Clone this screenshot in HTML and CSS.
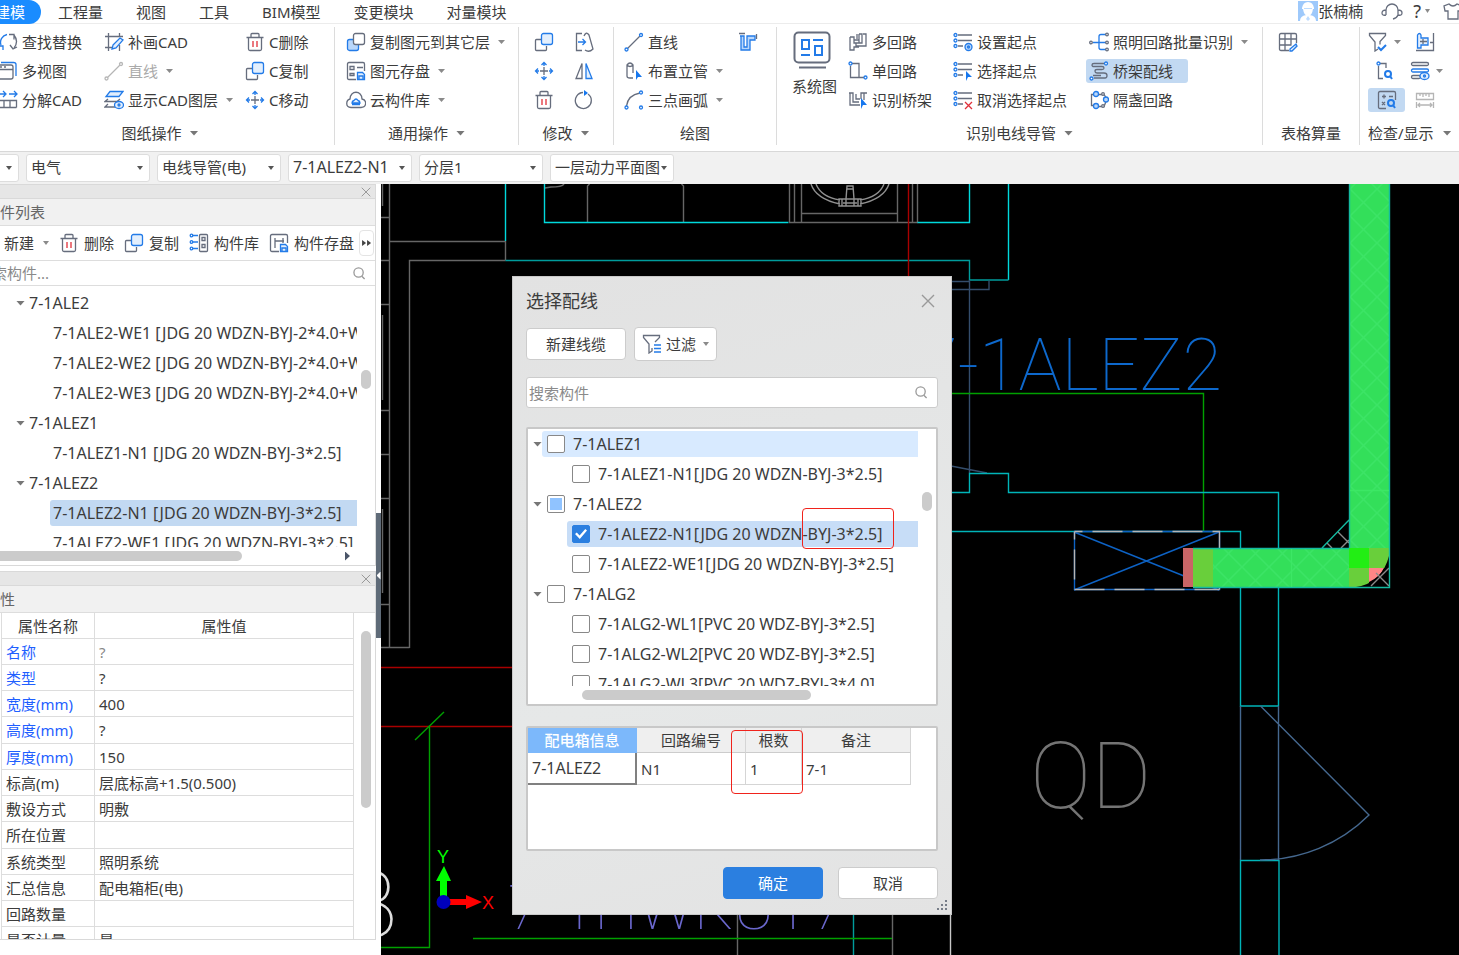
FILE: index.html
```html
<!DOCTYPE html>
<html lang="zh-CN">
<head>
<meta charset="utf-8">
<title>选择配线</title>
<link rel="stylesheet" href="styles.css">
</head>
<body>
<svg class="sprite" aria-hidden="true">
  <symbol id="find" viewBox="0 0 20 20"><path class="b" d="M9 2.500A8 8 0 0 0 3 13M0 14h5v4" /><path class="d" d="M11 2.500h5v5M16 3c4 5 3 9 0 13M12 13l3 4 4-2" /></symbol>
  <symbol id="views" viewBox="0 0 20 20"><path class="b" d="M3 1.500h12.500q2.500 0 2.500 2V15"/><rect class="d w" x="0" y="4" width="15" height="14" rx="2"/><path class="d" d="M0 8.500h15M2 6h2M6 6h2"/></symbol>
  <symbol id="split" viewBox="0 0 20 20"><path class="b" d="M0 4h7M5 1L8 4 5 7M11 4h8M16 1l3 3-3 3"/><path class="d" d="M0 10.500h18.500v7M0 17.500h18.500M6 10.500v7M12 10.500v7"/></symbol>
  <symbol id="sketch" viewBox="0 0 20 20"><path class="d" d="M4.500 1v18M1 4.500h18M1 15.500h7M15.500 1v4M15.500 13v6"/><path class="b f" d="M9 13l7-7 3 2-7 8-4 1z"/></symbol>
  <symbol id="line" viewBox="0 0 20 20"><path class="d" d="M3.500 16.500L16 4"/><circle class="b w" cx="2.500" cy="17.500" r="1.500"/><circle class="b w" cx="17" cy="3" r="1.500"/></symbol>
  <symbol id="layers" viewBox="0 0 20 20"><path class="b f" d="M6 1.500h13l-4 5H2z"/><path class="d" d="M4 9l-3 2.500h12l3-2.500M4 14l-3 3h10"/><ellipse class="b f" cx="15" cy="15" rx="4.500" ry="3.500"/><circle class="b" cx="15" cy="15" r="1"/></symbol>
  <symbol id="trash" viewBox="0 0 20 20"><path class="d" d="M1.500 5.500h17M6 5V2.500q0-1 1-1h6q1 0 1 1V5M3.500 6v11q0 1.500 1.500 1.500h10q1.500 0 1.500-1.500V6"/><path class="r" d="M8 9v6M12 9v6"/></symbol>
  <symbol id="copy" viewBox="0 0 20 20"><path class="d" d="M7 7.500H2.500q-1 0-1 1v9q0 1 1 1h9q1 0 1-1V14"/><rect class="b f" x="7.500" y="1.500" width="11" height="11" rx="2"/></symbol>
  <symbol id="copy2" viewBox="0 0 20 20"><rect class="b f2" x="1.500" y="7.500" width="11" height="11" rx="2"/><rect class="d w" x="7.500" y="1.500" width="11" height="11" rx="2"/></symbol>
  <symbol id="move" viewBox="0 0 20 20"><path class="d" d="M10 6v8M6 10h8"/><path class="b" d="M10 5V1.500M7.500 4L10 1.500 12.500 4M10 15v3.500M7.500 16l2.500 2.500 2.500-2.500M5 10H1.500M4 7.500L1.500 10 4 12.500M15 10h3.500M16 7.500l2.500 2.500-2.500 2.500"/></symbol>
  <symbol id="save" viewBox="0 0 20 20"><path class="d" d="M10 18.500H3q-1.500 0-1.500-1.500V3Q1.500 1.500 3 1.500h14q1.500 0 1.500 1.500v7M4 5.500h4v3H4zM11 6.500h6M4 12.500h4v2H4z"/><path class="b f" d="M11.500 11.500h5l2 2v5h-7zM13 18v-3h4v3"/></symbol>
  <symbol id="cloud" viewBox="0 0 20 20"><path class="d" d="M5 17.500C-1 17 0 10 4 9 4 0 16 0 16 9c5 1 5 8-1 8.500z"/><path class="b f" d="M6 13q0-2 2-2.500 2-3 4 0 2 .500 2 2.500zM6 14.500h8"/></symbol>
  <symbol id="stretch" viewBox="0 0 20 20"><path class="d" d="M8 1.500H2.500v17H8M10 4q2-5 5-1l4 14q-4 4-8 1"/><path class="b" d="M4 10h7M8.500 7l3 3-3 3"/></symbol>
  <symbol id="mirror" viewBox="0 0 20 20"><path class="d" d="M8 2.500v15H2z"/><path class="b f" d="M12 2.500v15h6z"/></symbol>
  <symbol id="rotate" viewBox="0 0 20 20"><path class="d" d="M9 2.500A8 8 0 1 0 14 4"/><path class="bf" d="M10 0l4 3-4 3z"/></symbol>
  <symbol id="riser" viewBox="0 0 20 20"><path class="d" d="M9 17H6q-3 0-3-2V4q3-4 6 0v8M3 4q3 3 6 0"/><path class="bf" d="M12 9l6 7h-4l-2 3z"/></symbol>
  <symbol id="arc" viewBox="0 0 20 20"><path class="d" d="M2.500 16Q4 5 16 3"/><circle class="b w" cx="2.500" cy="17.500" r="1.500"/><circle class="b w" cx="17" cy="2.500" r="1.500"/><circle class="b w" cx="17" cy="17.500" r="1.500"/></symbol>
  <symbol id="elbow" viewBox="0 0 20 20"><path class="b f2" d="M2 4h4v11h3V4h8v4h-5v10H3V4z"/><path class="d" d="M1 1.500h6M18.500 2v5"/></symbol>
  <symbol id="system" viewBox="0 0 40 40"><rect class="d k2" x="2.500" y="2.500" width="35" height="30" rx="4"/><path class="d k2" d="M7 37.500h27"/><path class="b k2" d="M10 10h7v9h-7zM23 16h7v9h-7zM21 10h10M9 25h9"/></symbol>
  <symbol id="multi" viewBox="0 0 20 20"><path class="d" d="M2 5h4v6h5V2M2 5v13h4v-3h5M9 2v5M6 8h5M11 2h3v9H8v3h10V2h-3"/></symbol>
  <symbol id="single" viewBox="0 0 20 20"><path class="d" d="M2.500 5v11.500H11V2.500H4M11 16.500h5"/><circle class="b w" cx="2.500" cy="2.500" r="1.500"/><circle class="b w" cx="17.500" cy="16.500" r="1.500"/></symbol>
  <symbol id="tray" viewBox="0 0 20 20"><path class="d" d="M1 3h4v9h6M2 3v12h10M8 4v5h4M13 9V3h6M16 3v7"/><path class="bf" d="M13 8l6 7h-4l-2 4z"/></symbol>
  <symbol id="nodes" viewBox="0 0 20 20"><path class="d" d="M5 3h14M5 8.500h14M5 14h5"/><circle class="b w" cx="2.500" cy="3" r="1.500"/><circle class="b w" cx="2.500" cy="8.500" r="1.500"/><circle class="b w" cx="2.500" cy="14" r="1.500"/></symbol>
  <symbol id="set" viewBox="0 0 20 20"><use href="#nodes"/><circle class="b f2" cx="15.500" cy="15" r="3.500"/><circle class="b" cx="15.500" cy="15" r="1"/></symbol>
  <symbol id="pick" viewBox="0 0 20 20"><use href="#nodes"/><path class="bf" d="M13 10l6 6h-4l-2 4z"/></symbol>
  <symbol id="unpick" viewBox="0 0 20 20"><use href="#nodes"/><path class="r" d="M12 12l7 7M19 12l-7 7"/></symbol>
  <symbol id="batch" viewBox="0 0 20 20"><path class="b" d="M4 10.500h6M17 2.500h-5q-2 0-2 2v11q0 2 2 2h5M10 10.500h7"/><circle class="d w" cx="2" cy="10.500" r="1.300"/><circle class="d w" cx="18" cy="2.500" r="1.300"/><circle class="d w" cx="18" cy="10.500" r="1.300"/><circle class="d w" cx="18" cy="17.500" r="1.300"/></symbol>
  <symbol id="wire" viewBox="0 0 20 20"><path class="d" d="M15 2.500H5q-2 0-2 1.500t2 1.500h8q2 0 2 1.500t-2 1.500H8q-2 0-2 1.700t2 1.800h7q3 0 3 2.500t-2 2.500H5M4 14.500h8"/><circle class="b w" cx="17" cy="2.500" r="1.500"/><circle class="b w" cx="2.500" cy="17.500" r="1.500"/></symbol>
  <symbol id="gang" viewBox="0 0 20 20"><path class="d" d="M4 4.500H2.500v11H6M8 16.500h7l2-5M8 4.500h7l2 3"/><circle class="b f2" cx="7" cy="4" r="2.500"/><circle class="b f2" cx="17" cy="9.500" r="2.500"/><circle class="b f2" cx="7" cy="16" r="2.500"/><circle class="d w" cx="14" cy="4" r="1.300"/><circle class="d w" cx="14" cy="16" r="1.300"/></symbol>
  <symbol id="grid" viewBox="0 0 20 20"><path class="d" d="M11 18.500H3q-1.500 0-1.500-1.500V3Q1.500 1.500 3 1.500h14q1.500 0 1.500 1.500v8M1.500 7h17M1.500 13h12M7 1.500v17M13 1.500v11"/><path class="b f" d="M12 17l6-5 1 2-5 5h-2z"/></symbol>
  <symbol id="funnelok" viewBox="0 0 20 20"><path class="d" d="M10 17l-3 2v-9L1.500 3.500v-2h16v2L12 9.500v3"/><path class="b k2" d="M10 15l3 3 5-5"/></symbol>
  <symbol id="pipe" viewBox="0 0 20 20"><path class="d" d="M18.500 1v17.500H1M18 10.500h-3"/><path class="b f" d="M2.500 3q2-3 3.500 0v3h7v7H6v3H2.500z"/><path class="d" d="M5 9.500h7M8 7v5"/></symbol>
  <symbol id="inspect" viewBox="0 0 20 20"><path class="d" d="M4.500 5v12.500H9M6 2.500h6V7"/><circle class="b w" cx="4.500" cy="2.500" r="1.500"/><circle class="b k2" cx="14" cy="13" r="3"/><path class="b k2" d="M16 15l2 3"/></symbol>
  <symbol id="showhide" viewBox="0 0 20 20"><rect class="d" x="1.500" y="1.500" width="17" height="3" rx="1.500"/><rect class="b" x="1.500" y="8" width="17" height="3" rx="1.500"/><rect class="d" x="1.500" y="14.500" width="9" height="3" rx="1.500"/><ellipse class="b f" cx="14.500" cy="15" rx="4.500" ry="3.500"/><circle class="b" cx="14.500" cy="15" r="1"/></symbol>
  <symbol id="check" viewBox="0 0 20 20"><path class="d" d="M9 18.500H3q-1.500 0-1.500-1.500V3Q1.500 1.500 3 1.500h14q1.500 0 1.500 1.500v7M5 6.500h4M7 4.500v4M12 6.500h4M5 12l3 3M8 12l-3 3"/><circle class="b k2" cx="14" cy="13" r="3"/><path class="b k2" d="M16 15l2 3"/></symbol>
  <symbol id="ruler" viewBox="0 0 20 20"><path class="d" d="M1.500 3.500h17v6h-17zM5 4v2M8 4v3M11 4v2M14 4v3M1.500 12v6M18.500 12v6M3 15h14M5 13l-2 2 2 2M15 13l2 2-2 2"/></symbol>
  <symbol id="headset" viewBox="0 0 22 20"><path class="d" d="M5 14V9a6 6 0 0 1 12 0v5M5 9q-4 0-4 3t4 2M17 9q4 0 4 3t-4 2q-1 3-5 4"/></symbol>
  <symbol id="shirt" viewBox="0 0 22 20"><path class="d" d="M7 3q4 4 8 0l5 2-1 5h-3v8H6v-8H3L2 5z"/></symbol>
  <symbol id="avatar" viewBox="0 0 20 20"><path fill="#9ec9fb" d="M0 0h20v20H0z"/><path fill="#fff" d="M4 7q1-6 6-6t6 6v1h-1q-1 7-5 7T5 8H4zM2 20q0-5 6-6h4q6 1 6 6z"/><path fill="#bddcff" d="M6 7h8v1H6zM10 15l2 3-2 2-2-2z"/></symbol>
  <symbol id="search" viewBox="0 0 14 14"><circle class="g" cx="6" cy="6" r="5"/><path class="g" d="M9.500 10l3 3"/></symbol>
  <symbol id="funnel" viewBox="0 0 20 20"><path class="d" d="M10 14v3l-3 2v-9L1.500 3.500v-2h16v2L13 8"/><path class="b" d="M12 11h7M12 14.500h7M12 18h7"/></symbol>
  <symbol id="library" viewBox="0 0 20 20"><path class="b" d="M4 2.500h5M4 9h5M4 15.500h5"/><circle class="b w" cx="2.500" cy="2.500" r="1.300"/><circle class="b w" cx="2.500" cy="9" r="1.300"/><circle class="b w" cx="2.500" cy="15.500" r="1.300"/><rect class="d" x="10.500" y="1.500" width="8" height="17" rx="1"/><path class="d" d="M13 4.500h3v3h-3zM13 11.500h3v3h-3z"/></symbol>
  <symbol id="store" viewBox="0 0 20 20"><path class="d" d="M10 18.500H3q-1.500 0-1.500-1.500V3Q1.500 1.500 3 1.500h14q1.500 0 1.500 1.500v7M6 5v10M6 8h9M14 5v5"/><path class="b f" d="M11.500 11.500h5l2 2v5h-7zM13 18v-3h4v3"/></symbol>
  <symbol id="close" viewBox="0 0 14 14"><path class="g" d="M1 1l12 12M13 1L1 13"/></symbol>
</svg>

<div class="app">
  <header class="tabbar">
    <nav class="tabs">
      <button class="tab active">建模</button><button class="tab">工程量</button><button class="tab">视图</button><button class="tab">工具</button><button class="tab">BIM模型</button><button class="tab">变更模块</button><button class="tab">对量模块</button>
    </nav>
    <div class="account">
      <svg class="ic"><use href="#avatar"/></svg><span class="user">张楠楠</span>
      <button class="plain" aria-label="客服"><svg class="ic wide"><use href="#headset"/></svg></button>
      <button class="plain help">?<i class="caret"></i></button>
      <button class="plain" aria-label="皮肤"><svg class="ic wide"><use href="#shirt"/></svg></button>
    </div>
  </header>

  <section class="ribbon">
    <div class="group drawing">
      <div class="tools">
        <button class="tool"><svg class="ic"><use href="#find"/></svg>查找替换</button>
        <button class="tool"><svg class="ic"><use href="#views"/></svg>多视图</button>
        <button class="tool"><svg class="ic"><use href="#split"/></svg>分解CAD</button>
        <button class="tool"><svg class="ic"><use href="#sketch"/></svg>补画CAD</button>
        <button class="tool off" disabled><svg class="ic"><use href="#line"/></svg>直线<i class="caret"></i></button>
        <button class="tool"><svg class="ic"><use href="#layers"/></svg>显示CAD图层<i class="caret"></i></button>
        <button class="tool"><svg class="ic"><use href="#trash"/></svg>C删除</button>
        <button class="tool"><svg class="ic"><use href="#copy"/></svg>C复制</button>
        <button class="tool"><svg class="ic"><use href="#move"/></svg>C移动</button>
      </div>
      <div class="caption">图纸操作<i class="caret big"></i></div>
    </div>
    <div class="group common">
      <div class="tools">
        <button class="tool"><svg class="ic"><use href="#copy2"/></svg>复制图元到其它层<i class="caret"></i></button>
        <button class="tool"><svg class="ic"><use href="#save"/></svg>图元存盘<i class="caret"></i></button>
        <button class="tool"><svg class="ic"><use href="#cloud"/></svg>云构件库<i class="caret"></i></button>
      </div>
      <div class="caption">通用操作<i class="caret big"></i></div>
    </div>
    <div class="group modify">
      <div class="tools">
        <button class="tool" aria-label="复制"><svg class="ic"><use href="#copy"/></svg></button>
        <button class="tool" aria-label="移动"><svg class="ic"><use href="#move"/></svg></button>
        <button class="tool" aria-label="删除"><svg class="ic"><use href="#trash"/></svg></button>
        <button class="tool" aria-label="拉伸"><svg class="ic"><use href="#stretch"/></svg></button>
        <button class="tool" aria-label="镜像"><svg class="ic"><use href="#mirror"/></svg></button>
        <button class="tool" aria-label="旋转"><svg class="ic"><use href="#rotate"/></svg></button>
      </div>
      <div class="caption">修改<i class="caret big"></i></div>
    </div>
    <div class="group draw">
      <div class="tools">
        <button class="tool"><svg class="ic"><use href="#line"/></svg>直线</button>
        <button class="tool"><svg class="ic"><use href="#riser"/></svg>布置立管<i class="caret"></i></button>
        <button class="tool"><svg class="ic"><use href="#arc"/></svg>三点画弧<i class="caret"></i></button>
        <button class="tool" aria-label="弯头"><svg class="ic"><use href="#elbow"/></svg></button>
      </div>
      <div class="caption">绘图</div>
    </div>
    <div class="group recognize">
      <div class="tools">
        <button class="tool tall"><svg class="ic large"><use href="#system"/></svg>系统图</button>
        <button class="tool"><svg class="ic"><use href="#multi"/></svg>多回路</button>
        <button class="tool"><svg class="ic"><use href="#single"/></svg>单回路</button>
        <button class="tool"><svg class="ic"><use href="#tray"/></svg>识别桥架</button>
        <button class="tool"><svg class="ic"><use href="#set"/></svg>设置起点</button>
        <button class="tool"><svg class="ic"><use href="#pick"/></svg>选择起点</button>
        <button class="tool"><svg class="ic"><use href="#unpick"/></svg>取消选择起点</button>
        <button class="tool"><svg class="ic"><use href="#batch"/></svg>照明回路批量识别<i class="caret"></i></button>
        <button class="tool on"><svg class="ic"><use href="#wire"/></svg>桥架配线</button>
        <button class="tool"><svg class="ic"><use href="#gang"/></svg>隔盏回路</button>
      </div>
      <div class="caption">识别电线导管<i class="caret big"></i></div>
    </div>
    <div class="group calc">
      <div class="tools">
        <button class="tool" aria-label="表格"><svg class="ic"><use href="#grid"/></svg></button>
      </div>
      <div class="caption">表格算量</div>
    </div>
    <div class="group review">
      <div class="tools">
        <button class="tool" aria-label="过滤"><svg class="ic"><use href="#funnelok"/></svg><i class="caret"></i></button>
        <button class="tool" aria-label="查看"><svg class="ic"><use href="#inspect"/></svg></button>
        <button class="tool on" aria-label="检查"><svg class="ic"><use href="#check"/></svg></button>
        <button class="tool" aria-label="管道"><svg class="ic"><use href="#pipe"/></svg></button>
        <button class="tool eye" aria-label="显示"><svg class="ic"><use href="#showhide"/></svg><i class="caret"></i></button>
        <button class="tool off" aria-label="测量" disabled><svg class="ic"><use href="#ruler"/></svg></button>
      </div>
      <div class="caption">检查/显示<i class="caret big"></i></div>
    </div>
  </section>

  <section class="filters">
    <span class="combo first"><select aria-label="楼层"><option></option></select></span>
    <span class="combo"><select aria-label="专业"><option>电气</option></select></span>
    <span class="combo"><select aria-label="构件类型"><option>电线导管(电)</option></select></span>
    <span class="combo code"><select aria-label="构件"><option>7-1ALEZ2-N1</option></select></span>
    <span class="combo"><select aria-label="分层"><option>分层1</option></select></span>
    <span class="combo"><select aria-label="图纸"><option>一层动力平面图</option></select></span>
  </section>

  <main class="work">
    <aside class="side">
      <section class="panel components">
        <div class="grip"><button class="plain" aria-label="关闭构件列表"><svg class="ic small"><use href="#close"/></svg></button></div>
        <h2 class="heading">件列表</h2>
        <div class="actions">
          <button class="act">新建<i class="caret"></i></button>
          <button class="act"><svg class="ic"><use href="#trash"/></svg>删除</button>
          <button class="act"><svg class="ic"><use href="#copy"/></svg>复制</button>
          <button class="act"><svg class="ic"><use href="#library"/></svg>构件库</button>
          <button class="act"><svg class="ic"><use href="#store"/></svg>构件存盘</button>
          <button class="more" aria-label="更多"><i></i><i></i></button>
        </div>
        <div class="find"><input type="text" placeholder="索构件..." aria-label="搜索构件"><svg class="ic small"><use href="#search"/></svg></div>
        <div class="treewrap">
          <ul class="tree">
            <li class="node"><i class="caret big"></i>7-1ALE2</li>
            <li class="leaf">7-1ALE2-WE1 [JDG 20 WDZN-BYJ-2*4.0+W</li>
            <li class="leaf">7-1ALE2-WE2 [JDG 20 WDZN-BYJ-2*4.0+W</li>
            <li class="leaf">7-1ALE2-WE3 [JDG 20 WDZN-BYJ-2*4.0+W</li>
            <li class="node"><i class="caret big"></i>7-1ALEZ1</li>
            <li class="leaf">7-1ALEZ1-N1 [JDG 20 WDZN-BYJ-3*2.5]</li>
            <li class="node"><i class="caret big"></i>7-1ALEZ2</li>
            <li class="leaf chosen">7-1ALEZ2-N1 [JDG 20 WDZN-BYJ-3*2.5]</li>
            <li class="leaf">7-1ALEZ2-WE1 [JDG 20 WDZN-BYJ-3*2.5]</li>
          </ul>
          <div class="vbar"><i></i></div>
          <div class="hbar"><i></i><b></b></div>
        </div>
      </section>
      <section class="panel props">
        <div class="grip"><button class="plain" aria-label="关闭属性"><svg class="ic small"><use href="#close"/></svg></button></div>
        <h2 class="heading">性</h2>
        <div class="propwrap">
          <div class="propclip">
          <table class="proptable">
            <thead><tr><th>属性名称</th><th>属性值</th></tr></thead>
            <tbody>
              <tr class="key"><td>名称</td><td class="dim">?</td></tr>
              <tr class="key"><td>类型</td><td>?</td></tr>
              <tr class="key"><td>宽度(mm)</td><td>400</td></tr>
              <tr class="key"><td>高度(mm)</td><td>?</td></tr>
              <tr class="key"><td>厚度(mm)</td><td>150</td></tr>
              <tr><td>标高(m)</td><td>层底标高+1.5(0.500)</td></tr>
              <tr><td>敷设方式</td><td>明敷</td></tr>
              <tr><td>所在位置</td><td></td></tr>
              <tr><td>系统类型</td><td>照明系统</td></tr>
              <tr><td>汇总信息</td><td>配电箱柜(电)</td></tr>
              <tr><td>回路数量</td><td></td></tr>
              <tr><td>是否计量</td><td>是</td></tr>
            </tbody>
          </table>
          </div>
          <div class="vbar"><i></i></div>
        </div>
      </section>
      <button class="fold" aria-label="收起"><i></i></button>
    </aside>

    <div class="stage">
      <svg class="cad" role="img" aria-label="一层动力平面图">
        <defs>
          <pattern id="mesh" width="27" height="27" patternUnits="userSpaceOnUse"><path d="M0 0l27 27M27 0L0 27" stroke="#3ce466" stroke-width="1.500" fill="none"/></pattern>
        </defs>
        <g transform="translate(-381 -184)" fill="none" stroke-width="1.400">
          <g stroke="#666">
            <path d="M389.500 184v464M409.500 648V260.500h96M381 647.500h28.500M389.500 241.500h116v19M381 217.500h8M381 260.500h8M381 304.500h8M381 410.500h8M381 454.500h8M381 498.500h8M381 604.500h8M382.500 184v22M382.500 315v85M382.500 509v84"/>
            <path d="M587.500 222v-36l2-2M683.500 222v-36l-2-2M545 188l6-1q11 0 13-3M789.500 184v38M794.500 184v38M801.500 184v38M897.500 184v38M912.500 184v38M917.500 184v38M789 222.500h129M801 213.500h97"/>
            <path stroke="#909090" d="M811 184Q816 199 840 204M816 184Q821 197 840 200M889 184Q884 199 860 204M884 184Q879 197 860 200M847 186l-1 13h8l-1-13zM839 199h22v7h-22zM842 199v7M846 199v7M854 199v7M858 199v7M847 189h6M843 203h14"/>
            <path d="M737.500 915v40M892.500 915v40"/>
          </g>
          <path stroke="#c8c8c8" d="M950.500 915v40"/>
          <path stroke="#00d9dc" d="M505.500 184v57M544.500 184v38.500h244M917.500 222.500h52V184M1008.500 184v96"/>
          <path stroke="#009c9c" d="M505.500 260.500h464v19.500h39M853.500 915v40"/>
          <path stroke="#a80000" d="M908.500 184v92M381 667.500h132M381 726.500h132"/>
          <path stroke="#344d6b" d="M951 281.500h19M951 289.500h38v-9M969.500 280v193M951 466l36 7"/>
          <path stroke="#00a000" d="M951 393.500h252.500V532M429.500 726v221.500H381M415 740l29-28M473 938.500h419"/>
          <path stroke="#00b4b8" d="M951 492.500h18.500v-19h39v19h270v213.500M951 531.500h289.500v174.500h38.500M1240.500 955v-94.500h38.500V955"/>
          <path stroke="#45688f" d="M1240.500 706v154M1278.500 706v154M1260.500 706L1369 815A154 154 0 0 1 1260 860"/>
          <g stroke="#0d62c4">
            <path d="M1074 532l145 58M1074 590l145-58"/>
            <path d="M1074.500 531.500h145v58h-145z"/>
            <path stroke="#b5b5b5" stroke-dasharray="30 10" stroke-dashoffset="22" d="M1074.500 531.500h145v58M1074.500 531.500v58h145"/>
          </g>
          <g>
            <path fill="#c96566" d="M1183 548h10v39h-10z"/>
            <path fill="#33df5a" d="M1193 548h156V184h40v364l-20 20-19 19h-157z"/>
            <path fill="url(#mesh)" d="M1213 548h136V184h40v364h-40v39h-136z"/>
            <path fill="#69cf3b" d="M1193 548h20v39h-20zM1369 548h20v20h-20zM1349 568h20v19h-20z"/>
            <path fill="#22ee14" d="M1349 548h20v20h-20z"/>
            <path fill="#ff8686" d="M1369 568h15q-4 9-15 14z"/>
            <path fill="#000" d="M1389 556v31h-33q26-4 33-31z"/>
            <path stroke="#8b8b8b" d="M1371 586l18-18M1376 573l13 13M1338 532l11 11M1327 543l5 5M1341 548l8-8"/>
            <path stroke="#14b9a0" d="M1322 548l27-28M1349.500 184v364M1389.500 184v403.500H1193M1193 548.500h156"/>
            <path stroke="#3ce765" d="M1291.500 549v38M1350 490.500h39"/>
          </g>
          <text class="plot" x="1222" y="390" font-size="72" text-anchor="end" fill="#0d68cc">7-1ALEZ2</text>
          <text class="plot" x="1030" y="808" font-size="92" fill="#747474">QD</text>
          <text class="plot" x="398" y="938" font-size="96" text-anchor="end" fill="#ddd">B</text>
          <text class="plot" x="508" y="929" font-size="62" fill="#6a67cc">7-1HWKUT7</text>
          <path fill="#0f0" d="M440 902v-21h-4l8-15 7 15h-4v21z"/>
          <path fill="#f00" d="M446 899h20v-4l16 7-16 7v-4h-20z"/>
          <circle cx="443.500" cy="902" r="7" fill="#00b"/>
          <text class="axis" x="443" y="863" text-anchor="middle" fill="#0f0">Y</text>
          <text class="axis" x="488" y="909" text-anchor="middle" fill="#f00">X</text>
        </g>
      </svg>

      <div class="dialog" role="dialog" aria-labelledby="dlg-title">
        <div class="titlebar"><h1 id="dlg-title">选择配线</h1><button class="plain" aria-label="关闭"><svg class="ic small"><use href="#close"/></svg></button></div>
        <div class="dlgtools">
          <button class="btn">新建线缆</button>
          <button class="btn filter"><svg class="ic"><use href="#funnel"/></svg>过滤<i class="caret"></i></button>
        </div>
        <div class="find boxed"><input type="text" placeholder="搜索构件" aria-label="搜索"><svg class="ic small"><use href="#search"/></svg></div>
        <div class="box picker">
          <ul class="checks">
            <li class="parent"><i class="caret big"></i><label class="hover"><input type="checkbox">7-1ALEZ1</label></li>
            <li><label><input type="checkbox">7-1ALEZ1-N1[JDG 20 WDZN-BYJ-3*2.5]</label></li>
            <li class="parent"><i class="caret big"></i><label><input type="checkbox" class="mixed">7-1ALEZ2</label></li>
            <li><label class="sel"><input type="checkbox" checked>7-1ALEZ2-N1[JDG 20 WDZN-BYJ-3*2.5]</label></li>
            <li><label><input type="checkbox">7-1ALEZ2-WE1[JDG 20 WDZN-BYJ-3*2.5]</label></li>
            <li class="parent"><i class="caret big"></i><label><input type="checkbox">7-1ALG2</label></li>
            <li><label><input type="checkbox">7-1ALG2-WL1[PVC 20 WDZ-BYJ-3*2.5]</label></li>
            <li><label><input type="checkbox">7-1ALG2-WL2[PVC 20 WDZ-BYJ-3*2.5]</label></li>
            <li><label><input type="checkbox">7-1ALG2-WL3[PVC 20 WDZ-BYJ-3*4.0]</label></li>
          </ul>
          <div class="vbar"><i></i></div>
          <div class="hbar"><i></i></div>
        </div>
        <div class="box circuits">
          <table>
            <colgroup><col class="c1"><col class="c2"><col class="c3"><col class="c4"></colgroup>
            <thead><tr><th class="cur">配电箱信息</th><th>回路编号</th><th>根数</th><th>备注</th></tr></thead>
            <tbody><tr><td class="cur">7-1ALEZ2</td><td>N1</td><td>1</td><td>7-1</td></tr></tbody>
          </table>
        </div>
        <div class="footer"><button class="btn primary">确定</button><button class="btn">取消</button></div>
        <svg class="sizer" viewBox="0 0 10 10" aria-hidden="true"><path d="M8 0h2v2H8zM4 4h2v2H4zM8 4h2v2H8zM0 8h2v2H0zM4 8h2v2H4zM8 8h2v2H8z"/></svg>
        <div class="mark spec"></div>
        <div class="mark amount"></div>
      </div>
    </div>
  </main>
</div>
</body>
</html>
```

FILE: styles.css
```css
* { box-sizing: border-box; }
body {
  margin: 0;
  font: 15px/24px "Noto Sans", "Noto Sans CJK SC", sans-serif;
  color: #3c3c3c;
  background: #fff;
}
button, input, select { font: inherit; color: inherit; }
button { padding: 0; border: 0; background: none; white-space: nowrap; }
ul { margin: 0; padding: 0; list-style: none; }
table { border-collapse: separate; border-spacing: 0; table-layout: fixed; }

.app { height: 100vh; display: flex; flex-direction: column; overflow: hidden; }

/* icons */
.sprite { position: absolute; width: 0; height: 0; }
.ic { width: 20px; height: 20px; flex: none; display: block; }
.ic.wide { width: 22px; }
.ic.small { width: 14px; height: 14px; }
.ic.large { width: 40px; height: 40px; }
.d, .b, .r, .g { fill: none; stroke: #666d7d; stroke-width: 1.3; }
.b { stroke: #237be8; }
.r { stroke: #e0303a; }
.g { stroke: #999; stroke-width: 1.4; }
.w { fill: #fff; }
.f { fill: #e3effd; }
.f2 { fill: #b9d7fb; }
.bf { fill: #1677ee; }
.k2 { stroke-width: 2; }

.caret {
  flex: none;
  width: 7px;
  height: 4px;
  background: #8a8a8a;
  clip-path: polygon(0 0, 100% 0, 50% 100%);
}
.caret.big { width: 9px; height: 5px; background: #777; }

/* tab bar */
.tabbar {
  flex: none;
  height: 24px;
  display: flex;
  justify-content: space-between;
  border-bottom: 1px solid #ececec;
}
.tabs { display: flex; gap: 1px; }
.tab { padding: 0 16px; height: 24px; }
.tab.active {
  margin-left: -21px;
  color: #fff;
  background: #1a8cff;
  border-radius: 12px;
}
.account { display: flex; align-items: center; margin-right: -5px; height: 22px; }
.user { margin-right: 18px; }
.help { display: flex; align-items: center; gap: 4px; margin: 0 12px 0 10px; font-size: 18px; }
.help .caret { width: 5px; }

/* ribbon */
.ribbon {
  flex: none;
  height: 128px;
  display: flex;
  padding: 3px 0 6px;
  border-bottom: 1px solid #d8d8d8;
}
.group {
  flex: none;
  display: flex;
  flex-direction: column;
  padding-top: 3px;
  border-right: 1px solid #dcdcdc;
}
.tools {
  display: grid;
  grid-auto-flow: column;
  grid-template-rows: repeat(3, 24px);
  row-gap: 5px;
  justify-content: start;
}
.tool { display: flex; align-items: center; gap: 4px; }
.tool .caret { margin-left: 4px; }
.tool.off { color: #aaa; }
.tool.off .ic { filter: grayscale(1); opacity: .5; }
.tool.on { background: #c2d9f2; border-radius: 3px; }
.caption { display: flex; align-items: center; justify-content: center; gap: 8px; margin-top: 9px; }
.drawing { width: 349px; margin-left: -14px; padding-left: 12px; }
.drawing .tools { grid-template-columns: 106px 141px auto; }
.drawing .caption { margin-left: -12px; }
.common { width: 184px; }
.common .tools { padding-left: 11px; }
.modify { width: 95px; }
.modify .tools { grid-template-columns: 40px 40px; padding-left: 15px; }
.draw { width: 163px; }
.draw .tools { grid-template-columns: 114px auto; padding-left: 10px; }
.recognize { width: 486px; }
.recognize .tools { grid-template-columns: 56px 105px 136px auto; padding-left: 15px; }
.tool.tall { grid-row: span 3; flex-direction: column; align-items: start; gap: 4px; }
.recognize .on { margin: 0 60px 0 -3px; padding-left: 3px; }
.calc { width: 97px; }
.calc .tools { padding-left: 15px; }
.review { flex: 1; border: 0; }
.review .tools { grid-template-columns: 47px 40px; padding-left: 8px; }
.review .tool { gap: 2px; }
.review .eye { margin-left: -5px; }
.review .tool:nth-child(2) { padding-left: 6px; }
.review .on { margin: 0 10px 0 0; justify-content: center; }
.review .caption { justify-content: start; padding-left: 8px; gap: 9px; }

/* selectors */
.filters {
  flex: none;
  height: 32px;
  display: flex;
  align-items: center;
  gap: 7px;
  background: #f1f1f1;
}
.combo { position: relative; width: 124px; }
.combo.first { width: 23px; margin-left: -4px; }
.combo.code { font-size: 16px; }
.combo::after {
  content: "";
  position: absolute;
  right: 7px;
  top: 12px;
  width: 6px;
  height: 4px;
  background: #555;
  clip-path: polygon(0 0, 100% 0, 50% 100%);
  pointer-events: none;
}
.combo select {
  display: block;
  width: 100%;
  height: 28px;
  padding: 0 0 2px 4px;
  appearance: none;
  background: #fff;
  border: 1px solid #ddd;
  border-radius: 3px;
}

/* side panels */
.work { flex: 1; min-height: 0; display: flex; }
.side {
  position: relative;
  flex: none;
  width: 381px;
  padding-right: 5px;
  display: flex;
  flex-direction: column;
  gap: 5px;
  background: #fff;
}
.panel { display: flex; flex-direction: column; min-height: 0; border-right: 1px solid #d9d9d9; border-bottom: 1px solid #d9d9d9; }
.components { flex: 0 0 382px; }
.props { flex: 1; margin-bottom: 15px; }
.grip {
  flex: none;
  height: 15px;
  display: flex;
  align-items: center;
  justify-content: flex-end;
  padding-right: 4px;
  background: #e6e6e6;
  border-top: 1px solid #d9d9d9;
  border-bottom: 1px solid #d9d9d9;
}
.grip .ic { width: 10px; height: 10px; }
.heading {
  flex: none;
  margin: 0;
  height: 27px;
  font-size: 15px;
  line-height: 27px;
  font-weight: 400;
  color: #666;
  background: #f1f1f1;
  border-bottom: 1px solid #ddd;
}
.actions { flex: none; height: 35px; display: flex; align-items: center; gap: 10px; padding-left: 4px; border-bottom: 1px solid #ddd; }
.act { display: flex; align-items: center; gap: 5px; }
.act .caret { margin-left: 4px; width: 6px; }
.more { display: flex; gap: 1px; margin-left: -5px; padding: 9px 2px; border: 1px solid #e4e4e4; border-radius: 4px; }
.more i { width: 4px; height: 6px; background: #444; clip-path: polygon(0 0, 100% 50%, 0 100%); }
.find { flex: none; display: flex; align-items: center; height: 25px; padding-right: 9px; border-bottom: 1px solid #ddd; }
.find input { flex: 1; min-width: 0; height: 24px; padding: 0; border: 0; outline: 0; background: none; }
.find input::placeholder { color: #8a8a8a; opacity: 1; }
.components .find input { text-indent: -8px; }
.find .ic { width: 13px; height: 13px; }

.treewrap, .picker { flex: 1; min-height: 0; display: grid; grid-template-columns: 1fr 18px; grid-template-rows: 1fr 18px; font-size: 16px; }
.tree { overflow: hidden; padding-top: 4px; }
.tree li { height: 26px; margin-bottom: 4px; display: flex; align-items: center; white-space: nowrap; }
.tree .node { padding-left: 16px; gap: 4px; }
.tree .leaf { margin-left: 50px; padding-left: 3px; }
.tree .chosen { background: #c2d9f2; border-radius: 3px 0 0 3px; }
.vbar { display: flex; justify-content: center; }
.vbar i { width: 10px; border-radius: 5px; background: #cbcbcb; }
.treewrap .vbar i { margin-top: 84px; height: 19px; }
.hbar { grid-column: 1 / -1; display: flex; align-items: center; justify-content: space-between; }
.hbar i { height: 10px; border-radius: 5px; background: #cbcbcb; }
.treewrap .hbar i { width: 242px; border-radius: 0 5px 5px 0; }
.hbar b { width: 5px; height: 9px; margin-right: 25px; background: #4a5568; clip-path: polygon(0 0, 100% 50%, 0 100%); }

.propwrap { flex: 1; min-height: 0; display: grid; grid-template-columns: 1fr 21px; }
.propclip { overflow: hidden; padding-left: 1px; }
.proptable { width: 100%; border-left: 1px solid #ddd; }
.proptable th, .proptable td { height: 26px; padding: 0 4px; line-height: 24px; font-weight: 400; text-align: left; white-space: nowrap; border-right: 1px solid #ddd; border-bottom: 1px solid #ddd; }
.proptable th { text-align: center; }
.proptable th:first-child { width: 93px; }
.proptable tbody tr:nth-child(4n) td { height: 27px; }
.proptable .key td:first-child { color: #1f5fff; }
.proptable .dim { color: #888; }
.propwrap .vbar i { margin: 18px 0 0 2px; height: 177px; }

.fold { position: absolute; right: 0; top: 329px; width: 5px; height: 125px; background: #5f6b78; display: flex; align-items: center; justify-content: center; }
.fold i { width: 4px; height: 8px; background: #fff; clip-path: polygon(100% 0, 100% 100%, 0 50%); }

/* drawing area */
.stage { position: relative; flex: 1; min-width: 0; overflow: hidden; background: #000; }
.cad { position: absolute; width: 100%; height: 100%; }
.plot { font-family: Roboto, Lato, sans-serif; font-weight: 100; }
.axis { font-family: "Liberation Sans", sans-serif; font-size: 18px; }

/* dialog */
.dialog {
  position: absolute;
  left: 131px;
  top: 92px;
  width: 440px;
  padding: 8px 13px 15px;
  display: flex;
  flex-direction: column;
  background: linear-gradient(165deg, #e2e2e2, #e6e8e8 60%, #e3e3e3);
  border: 1px solid #c9c9c9;
}
.titlebar { display: flex; align-items: center; justify-content: space-between; height: 32px; padding-right: 3px; }
.titlebar h1 { margin: 0; font-size: 18px; font-weight: 400; }
.dlgtools { display: flex; align-items: center; gap: 8px; height: 36px; margin-top: 9px; }
.btn { width: 100px; height: 32px; background: #fff; border: 1px solid #ccc; border-radius: 4px; }
.btn.filter { width: 83px; height: 34px; display: flex; align-items: center; justify-content: center; gap: 4px; }
.btn.filter .caret { margin-left: 3px; width: 6px; }
.btn.primary { color: #fff; background: #2b7fe0; border-color: #2b7fe0; }
.find.boxed { height: 31px; margin-top: 15px; padding: 0 9px 0 2px; background: #fff; border: 1px solid #ccc; border-radius: 3px; }
.box { background: #fff; border: 2px solid #c8c8c8; border-radius: 2px; }
.picker { flex: none; height: 279px; margin-top: 19px; }
.checks { overflow: hidden; padding-top: 2px; }
.checks li { display: flex; align-items: center; height: 26px; margin-bottom: 4px; padding-left: 39px; }
.checks .parent { padding-left: 5px; }
.checks label { flex: 1; height: 26px; display: flex; align-items: center; gap: 8px; padding-left: 5px; white-space: nowrap; border-radius: 3px 0 0 3px; }
.checks .hover { background: #d8eaff; }
.checks .sel { background: #c7ddf7; }
.checks input {
  appearance: none;
  flex: none;
  width: 18px;
  height: 18px;
  margin: 0;
  background: #fff;
  border: 1px solid #888;
  border-radius: 2px;
}
.checks .mixed { background: #90c3ff content-box; padding: 2px; }
.checks input:checked { display: grid; place-items: center; background: #2b7fe0; border-color: #2b7fe0; }
.checks input:checked::after { content: ""; width: 12px; height: 10px; background: #fff; clip-path: polygon(0 50%, 15% 36%, 38% 66%, 86% 0, 100% 14%, 40% 100%); }
.picker .vbar { justify-content: flex-start; padding-left: 4px; }
.picker .vbar i { margin-top: 63px; height: 19px; }
.picker .hbar i { width: 229px; margin-left: 54px; }
.circuits { height: 125px; margin-top: 20px; }
.circuits .c1, .circuits .c2, .circuits .c4 { width: 109px; }
.circuits .c3 { width: 56px; }
.circuits table { width: 383px; }
.circuits th { height: 25px; padding: 0; line-height: 24px; font-weight: 400; background: #efefef; border-right: 1px solid #d5d5d5; border-bottom: 1px solid #ccc; }
.circuits th.cur { color: #fff; font-weight: 500; background: #7cb8fb; border-color: #7cb8fb; }
.circuits td { height: 32px; padding: 0 4px; border-right: 1px solid #d5d5d5; border-bottom: 1px solid #d5d5d5; }
.circuits td.cur { font-size: 16px; border-right: 2px solid #808080; border-bottom: 2px solid #808080; }
.footer { display: flex; justify-content: flex-end; gap: 15px; margin-top: 16px; }
.sizer { position: absolute; right: 4px; bottom: 4px; width: 10px; height: 10px; fill: #777d88; }
.mark { position: absolute; border: 1px solid #f0231c; border-radius: 4px; pointer-events: none; }
.spec { left: 289px; top: 231px; width: 92px; height: 41px; }
.amount { left: 218px; top: 453px; width: 72px; height: 64px; }
```
